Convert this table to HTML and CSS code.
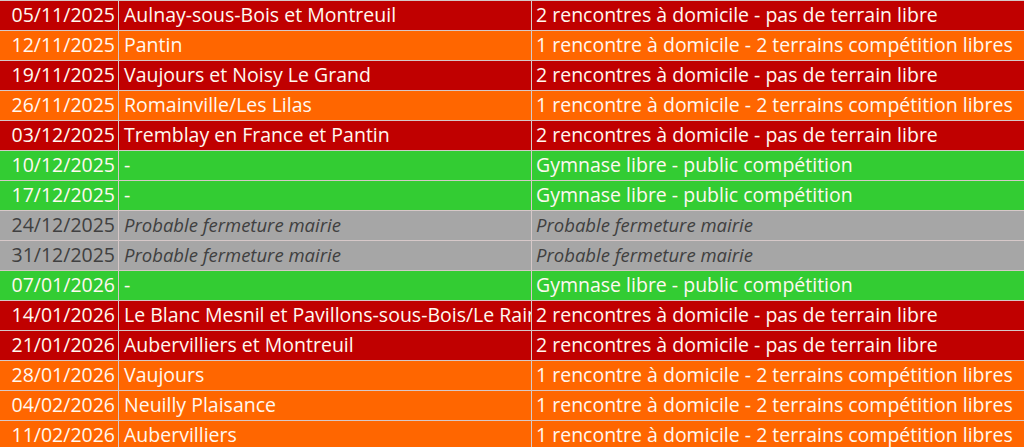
FILE: index.html
```html
<!DOCTYPE html>
<html lang="fr">
<head>
<meta charset="utf-8">
<title>Planning</title>
<link rel="stylesheet" href="styles.css">
</head>
<body>
<div class="sheet">
  <div class="row red"><div class="c date">05/11/2025</div><div class="c name">Aulnay-sous-Bois et Montreuil</div><div class="c status">2 rencontres à domicile - pas de terrain libre</div></div>
  <div class="row orange"><div class="c date">12/11/2025</div><div class="c name">Pantin</div><div class="c status">1 rencontre à domicile - 2 terrains compétition libres</div></div>
  <div class="row red"><div class="c date">19/11/2025</div><div class="c name">Vaujours et Noisy Le Grand</div><div class="c status">2 rencontres à domicile - pas de terrain libre</div></div>
  <div class="row orange"><div class="c date">26/11/2025</div><div class="c name">Romainville/Les Lilas</div><div class="c status">1 rencontre à domicile - 2 terrains compétition libres</div></div>
  <div class="row red"><div class="c date">03/12/2025</div><div class="c name">Tremblay en France et Pantin</div><div class="c status">2 rencontres à domicile - pas de terrain libre</div></div>
  <div class="row green"><div class="c date">10/12/2025</div><div class="c name">-</div><div class="c status">Gymnase libre - public compétition</div></div>
  <div class="row green"><div class="c date">17/12/2025</div><div class="c name">-</div><div class="c status">Gymnase libre - public compétition</div></div>
  <div class="row grey"><div class="c date">24/12/2025</div><div class="c name note">Probable fermeture mairie</div><div class="c status note">Probable fermeture mairie</div></div>
  <div class="row grey"><div class="c date">31/12/2025</div><div class="c name note">Probable fermeture mairie</div><div class="c status note">Probable fermeture mairie</div></div>
  <div class="row green"><div class="c date">07/01/2026</div><div class="c name">-</div><div class="c status">Gymnase libre - public compétition</div></div>
  <div class="row red"><div class="c date">14/01/2026</div><div class="c name">Le Blanc Mesnil et Pavillons-sous-Bois/Le Raincy</div><div class="c status">2 rencontres à domicile - pas de terrain libre</div></div>
  <div class="row red"><div class="c date">21/01/2026</div><div class="c name">Aubervilliers et Montreuil</div><div class="c status">2 rencontres à domicile - pas de terrain libre</div></div>
  <div class="row orange"><div class="c date">28/01/2026</div><div class="c name">Vaujours</div><div class="c status">1 rencontre à domicile - 2 terrains compétition libres</div></div>
  <div class="row orange"><div class="c date">04/02/2026</div><div class="c name">Neuilly Plaisance</div><div class="c status">1 rencontre à domicile - 2 terrains compétition libres</div></div>
  <div class="row orange"><div class="c date">11/02/2026</div><div class="c name">Aubervilliers</div><div class="c status">1 rencontre à domicile - 2 terrains compétition libres</div></div>
</div>
</body>
</html>
```
FILE: styles.css
```css
html, body {
  margin: 0;
  padding: 0;
  background: #ffffff;
}
body {
  font-family: "Open Sans", "Liberation Sans", sans-serif;
  font-size: 19.5px;
  color: #fff8f0;
  overflow: hidden;
}
.sheet {
  display: flex;
  flex-direction: column;
  width: 1024px;
}
.row {
  display: grid;
  grid-template-columns: 119px 413px 1fr;
  height: 30px;
}
.c {
  box-sizing: border-box;
  height: 30px;
  border-top: 1px solid #d6c8c8;
  white-space: nowrap;
  overflow: hidden;
  line-height: 28px;
}
.date {
  text-align: right;
  padding-right: 3px;
  border-right: 1px solid #d6c8c8;
}
.name {
  padding-left: 5px;
  border-right: 1px solid #d6c8c8;
}
.status {
  padding-left: 4px;
}
.red { background: #c00000; }
.orange { background: #ff6600; }
.green { background: #33cc33; }
.grey { background: #a6a6a6; color: #404040; }
.note {
  font-style: italic;
  font-size: 18.5px;
}
```
